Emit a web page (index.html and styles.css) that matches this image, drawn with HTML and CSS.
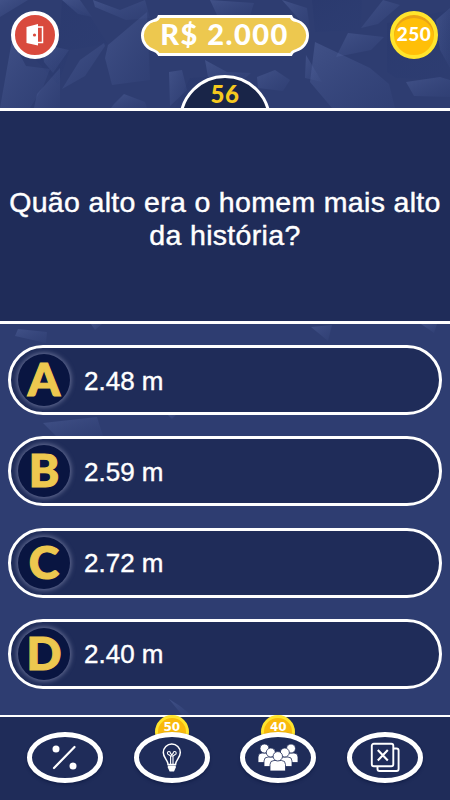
FILE: index.html
```html
<!DOCTYPE html>
<html lang="pt-BR">
<head>
	<title>Quiz</title>
	<meta charset="utf-8">
	<meta name="viewport" content="width=device-width, initial-scale=1.0">
	<link rel="stylesheet" href="styles.css">
</head>

<body>
	<svg class="shards" viewBox="0 0 450 800" aria-hidden="true">
		<defs>
			<linearGradient id="shard" x1="0" y1="0" x2="1" y2="1">
				<stop offset="0" stop-color="#6d80bb" stop-opacity=".3"/>
				<stop offset="1" stop-color="#4b5e9c" stop-opacity=".08"/>
			</linearGradient>
			<linearGradient id="shade" x1="0" y1="0" x2="1" y2="1">
				<stop offset="0" stop-color="#233267" stop-opacity=".3"/>
				<stop offset="1" stop-color="#263972" stop-opacity=".1"/>
			</linearGradient>
		</defs>
		<g fill="url(#shade)">
			<path d="M62 0L90 16L108 44L70 50L58 85L36 60L60 30Z"/>
			<path d="M312 0L362 0L361 30L315 32Z"/>
			<path d="M387 23L450 10L450 80L396 78L387 72Z"/>
			<path d="M190 78L245 74L240 108L175 108Z"/>
		</g>
		<g fill="url(#shard)">
			<path d="M0 0L28 0L0 17Z"/>
			<path d="M62 0L80 0L92 17L78 14Z"/>
			<path d="M93 0L120 10L145 0L150 18L126 20L95 7Z"/>
			<path d="M12 40L26 66L50 69L43 87L30 108L0 108Z"/>
			<path d="M42 44L69 50L53 73L44 62Z"/>
			<path d="M60 68L60 108L34 108L37 94Z"/>
			<path d="M80 60L104 43L105 46L85 76L62 89Z"/>
			<path d="M108 45L147 12L150 80L112 85L105 58Z"/>
			<path d="M114 104L124 94L145 102L147 108L111 108Z"/>
			<path d="M210 0L254 3L250 16L217 15Z"/>
			<path d="M282 0L307 8L310 30L297 17Z"/>
			<path d="M169 72L182 70L187 90L170 106Z"/>
			<path d="M205 60L227 72L251 73L237 85L208 77Z"/>
			<path d="M257 77L275 70L290 80L283 91L258 88Z"/>
			<path d="M306 55L322 82L305 78Z"/>
			<path d="M361 28L383 0L400 5L378 24Z"/>
			<path d="M348 33L384 37L371 50L336 57Z"/>
			<path d="M315 42L370 68L389 84L395 108L332 108L310 82Z"/>
			<path d="M406 82L440 77L450 80L450 97L414 96Z"/>
			<path d="M436 20L450 8L450 68L440 50Z"/>
			<path d="M18 329L47 332L46 343L15 336Z"/>
			<path d="M91 324L102 324L95 330Z"/>
			<path d="M43 423L97 417L103 436L56 436Z"/>
			<path d="M168 415L176 415L172 419Z"/>
			<path d="M311 327L332 325L328 341Z"/>
			<path d="M421 324L437 324L434 333Z"/>
			<path d="M169 699L180 706L191 715L182 715Z"/>
		</g>
	</svg>

	<div class="game">
		<header class="top">
			<button class="exit" aria-label="Sair">
				<svg width="20" height="24" viewBox="0 0 20 24">
					<path d="M1.500 4L13 1V22.500L1.500 20Z" fill="#fff"/>
					<path d="M12 4H17.500V19.500H12" fill="none" stroke="#fff" stroke-width="1.500"/>
					<circle cx="9.500" cy="12" r="1.600" fill="#d94a3d"/>
				</svg>
			</button>
			<div class="prize">
				<svg class="plate" width="170" height="43" viewBox="0 0 170 43">
					<path d="M19 1.500H151Q152 5 156 5.500A15.500 15.500 0 0 1 156 35.500Q152 36.500 151 39.500H19Q17 36.500 14 35.500A15.500 15.500 0 0 1 14 5.500Q18 5 19 1.500Z" fill="#edc84f" stroke="#fff" stroke-width="2.800"/>
				</svg>
				<span>R$ 2.000</span>
			</div>
			<div class="coins">250</div>
		</header>

		<div class="count"><span>56</span></div>

		<main>
			<h1 class="question">Quão alto era o homem mais alto da história?</h1>
			<div class="answers">
				<button class="answer"><b>A</b><span>2.48 m</span></button>
				<button class="answer"><b>B</b><span>2.59 m</span></button>
				<button class="answer"><b>C</b><span>2.72 m</span></button>
				<button class="answer"><b>D</b><span>2.40 m</span></button>
			</div>
		</main>

		<footer class="helps">
			<div class="help">
				<button aria-label="Metade">
					<svg width="44" height="32" viewBox="0 0 44 32">
						<path d="M11 26L31.500 5" stroke="#fff" stroke-width="2.200" stroke-linecap="round"/>
						<circle cx="13" cy="7" r="3.500" fill="#fff"/>
						<circle cx="30" cy="24" r="3.500" fill="#fff"/>
					</svg>
				</button>
			</div>
			<div class="help">
				<i class="cost">50</i>
				<button aria-label="Dica">
					<svg width="44" height="32" viewBox="0 0 44 32" fill="none" stroke="#fff" stroke-width="1.500">
						<path d="M18 22.500C18 18 13.300 16 13.300 10.500A8.500 8.500 0 0 1 30.300 10.500C30.300 16 25.600 18 25.600 22.500Z"/>
						<path d="M20.600 22V14L18.500 12.500A1.500 1.500 0 1 1 20.400 11L21.800 13L23.200 11A1.500 1.500 0 1 1 25.100 12.500L23 14V22M20.500 14H23.100" stroke-width="1.100"/>
						<path d="M17.800 23.500H25.800V25.500L24 29.500H19.600L17.800 25.500Z" fill="#fff" stroke="none"/>
					</svg>
				</button>
			</div>
			<div class="help">
				<i class="cost">40</i>
				<button aria-label="Plateia">
					<svg width="44" height="32" viewBox="0 0 44 32" fill="#fff" stroke="#1f2c59" stroke-width=".8">
						<path d="M2 20.500V15Q2 11 6 11H11Q15 11 15 15V20.500Z"/>
						<circle cx="8.500" cy="6.500" r="4.500"/>
						<path d="M28.500 20.500V15Q28.500 11 32.500 11H38Q42 11 42 15V20.500Z"/>
						<circle cx="35" cy="6.500" r="4.500"/>
						<path d="M8 24.500V19Q8 15 12 15H18Q22 15 22 19V24.500Z"/>
						<circle cx="14.800" cy="10.500" r="4.500"/>
						<path d="M22 24.500V19Q22 15 26 15H32Q36 15 36 19V24.500Z"/>
						<circle cx="28.800" cy="10.500" r="4.500"/>
						<path d="M14 29V22.500Q14 18.500 18 18.500H25.500Q29.500 18.500 29.500 22.500V29Z"/>
						<circle cx="21.800" cy="14.300" r="4.700"/>
					</svg>
				</button>
			</div>
			<div class="help">
				<button aria-label="Pular">
					<svg width="44" height="32" viewBox="0 0 44 32" fill="none" stroke="#fff" stroke-width="1.900">
						<rect x="8.800" y="1.800" width="21.500" height="22.500" rx="2"/>
						<path d="M31 6.500H33.500Q35.600 6.500 35.600 8.500V27Q35.600 29 33.500 29H16.500Q14.500 29 14.500 27V25"/>
						<path d="M14.800 8L24.800 18.500M24.800 8L14.800 18.500" stroke-width="2.100"/>
					</svg>
				</button>
			</div>
		</footer>
	</div>
</body>
</html>
```
FILE: styles.css
```css
* {
	box-sizing: border-box;
	margin: 0;
	padding: 0;
}
body {
	height: 800px;
	overflow: hidden;
	background-color: #2e3d71;
	color: #fff;
	font-family: 'Liberation Sans', Arial, sans-serif;
}
button {
	border: 0;
	color: inherit;
	font-family: inherit;
}
svg {
	display: block;
}
.shards {
	position: absolute;
	top: 0;
	left: 0;
	width: 450px;
	height: 800px;
	z-index: -1;
}
.game {
	width: 450px;
	height: 800px;
	display: flex;
	flex-direction: column;
}

/* top bar */
.top {
	height: 75px;
	padding: 11px 12px 0 11px;
	display: flex;
	justify-content: space-between;
	align-items: flex-start;
}
.exit, .coins {
	width: 48px;
	height: 48px;
	border-radius: 50%;
	display: flex;
	align-items: center;
	justify-content: center;
}
.exit {
	border: 4.5px solid #fff;
	background-color: #d94a3d;
}
.prize {
	display: grid;
	justify-items: center;
	align-items: start;
	margin-top: 4px;
	font: 900 29px/38px Lato, sans-serif;
	letter-spacing: 1.5px;
}
.prize > * {
	grid-area: 1 / 1;
}
.coins {
	border: 4px solid #ffe52d;
	background-color: #ffbf08;
	box-shadow: inset 0 3px 0 #e9a316;
	font: 900 19px/38px Lato, sans-serif;
	letter-spacing: .5px;
	padding-bottom: 2px;
}
.count {
	width: 92px;
	height: 33px;
	align-self: center;
	overflow: hidden;
}
.count span {
	display: block;
	height: 92px;
	border: 3px solid #fff;
	border-radius: 50%;
	background-color: #192548;
	color: #f5c91e;
	text-align: center;
	font: 900 24px/31px Lato, sans-serif;
	letter-spacing: .5px;
}

/* question and answers */
.question {
	height: 216px;
	border: solid #fff;
	border-width: 3px 0;
	background-color: #1f2c59;
	padding: 75px 0 0;
	text-align: center;
	font-size: 28.5px;
	font-weight: normal;
	line-height: 33px;
	letter-spacing: .33px;
	-webkit-text-stroke: .45px #fff;
}
.answers {
	display: flex;
	flex-direction: column;
	gap: 21.3px;
	padding: 21px 8px 0;
}
.answer {
	height: 70px;
	border: 3px solid #fff;
	border-radius: 35px;
	background-color: #1f2c59;
	display: flex;
	align-items: center;
	gap: 14px;
	padding-left: 7px;
	font-size: 26px;
	-webkit-text-stroke: .4px #fff;
}
.answer span {
	padding-top: 2px;
}
.answer b {
	width: 52px;
	height: 52px;
	border-radius: 50%;
	background-color: #091541;
	box-shadow: 0 0 5px 1px #6c7499;
	color: #edc84f;
	text-align: center;
	font: 900 46px/49px Lato, sans-serif;
	-webkit-text-stroke: 1.2px #edc84f;
}

/* helps */
.helps {
	height: 85px;
	margin-top: auto;
	border-top: 2px solid #fff;
	background-color: #1f2c59;
	display: flex;
	justify-content: center;
	gap: 30.5px;
	padding-top: 15px;
}
.help {
	position: relative;
	width: 76px;
	height: 51px;
}
.help button {
	position: relative;
	width: 100%;
	height: 100%;
	border: 5px solid #fff;
	border-radius: 50%;
	background-color: #1f2c59;
	box-shadow: 0 2px 3px #14204a;
	display: flex;
	align-items: center;
	justify-content: center;
}
.cost {
	position: absolute;
	left: 21px;
	top: -17px;
	width: 34px;
	height: 34px;
	border: 3px solid #ffe52d;
	border-radius: 50%;
	background-color: #f9b90c;
	text-align: center;
	font: bold 12px/18px 'DejaVu Sans', sans-serif;
}
```
